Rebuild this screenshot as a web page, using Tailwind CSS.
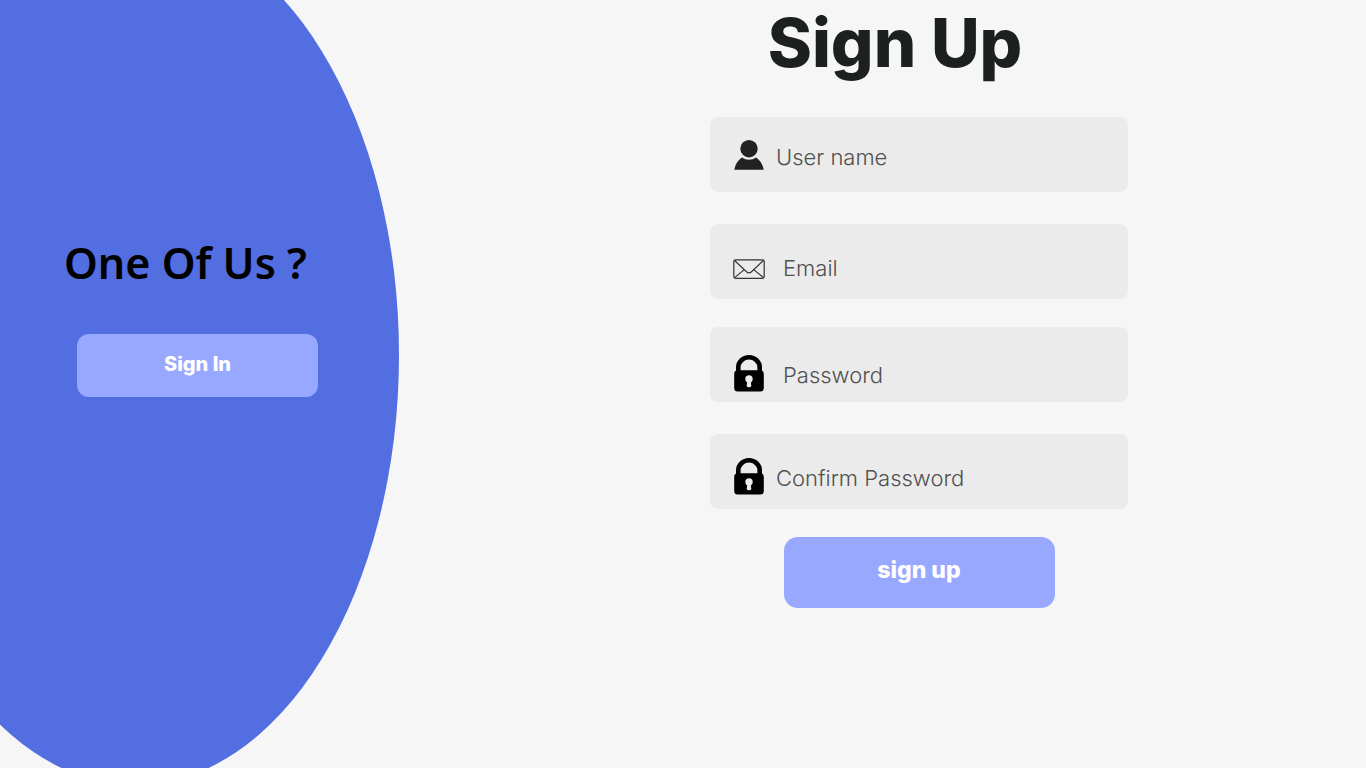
<!DOCTYPE html>
<html lang="en">
<head>
<meta charset="utf-8">
<meta name="viewport" content="width=device-width, initial-scale=1">
<title>Sign Up</title>
<script src="https://cdn.jsdelivr.net/npm/@tailwindcss/browser@4"></script>
</head>
<body class="relative flex min-h-screen overflow-hidden bg-[#f6f6f6] font-['Inter',sans-serif]">
  <div class="absolute -top-[75px] -left-[129px] h-[860px] w-[528px] rounded-[50%] bg-[#526ee0]" aria-hidden="true"></div>

  <aside class="relative flex w-[395px] shrink-0 flex-col items-center pt-[231px]">
    <h2 class="pr-6 font-['Noto_Sans',sans-serif] text-[43px] leading-16 font-semibold text-black">One Of Us ?</h2>
    <button type="button" class="mt-[39px] h-[63px] w-[241px] rounded-xl bg-[#99a8ff] pb-1 text-[20px] font-extrabold text-white">Sign In</button>
  </aside>

  <main class="relative flex flex-1 flex-col items-center pl-[77px]">
    <h1 class="pr-12 text-[67px] leading-[86px] font-extrabold text-[#1c211f]">Sign Up</h1>
    <form class="mt-[31px] flex w-full max-w-[418px] flex-col items-center">
      <label class="flex h-[75px] w-full items-center gap-3 rounded-lg bg-[#ebebeb] px-6">
        <svg class="h-[30px] w-[30px] shrink-0" viewBox="0 0 30 30" fill="#222" aria-hidden="true">
          <circle cx="15" cy="8.700" r="8.700"/>
          <path d="M.3 29.700C1.300 24.200 4 20 7.900 17.500Q15 22.200 22.100 17.500C26 20 28.700 24.200 29.700 29.700Z"/>
        </svg>
        <input type="text" aria-label="User name" placeholder="User name" class="h-8 min-w-0 flex-1 pt-1.5 text-[22px] font-light text-[#444] outline-none placeholder:text-[#505050]">
      </label>
      <label class="mt-8 flex h-[75px] w-full items-center gap-[18px] rounded-lg bg-[#ebebeb] px-[23px] pt-[14px]">
        <svg class="h-5 w-8 shrink-0" viewBox="0 0 32 20" fill="none" stroke="#333" stroke-width="1.200" stroke-linejoin="round" aria-hidden="true">
          <rect x=".8" y=".8" width="30.400" height="18.600" rx="1.800"/>
          <path d="M1.300 1.300 13.500 12.700Q16 15 18.500 12.700L30.700 1.300M1.300 18.900 11.300 10.600M30.700 18.900 20.700 10.600"/>
        </svg>
        <input type="email" aria-label="Email" placeholder="Email" class="h-8 min-w-0 flex-1 text-[22px] font-light text-[#444] outline-none placeholder:text-[#505050]">
      </label>
      <label class="mt-7 flex h-[75px] w-full items-center gap-[19px] rounded-lg bg-[#ebebeb] px-6 pt-[18px]">
        <svg class="h-[37px] w-[30px] shrink-0" viewBox="0 0 30 37" aria-hidden="true">
          <path d="M4.300 18V12.500a10.700 10.200 0 0 1 21.400 0V18" fill="none" stroke="#000" stroke-width="4.600"/>
          <rect x=".2" y="15.200" width="29.600" height="21.300" rx="3.500"/>
          <circle cx="15" cy="24" r="3.700" fill="#ebebeb"/>
          <path d="M13.300 26h3.400l.6 4.800q0 1.500-2.300 1.500t-2.300-1.500Z" fill="#ebebeb"/>
        </svg>
        <input type="password" aria-label="Password" placeholder="Password" class="h-8 min-w-0 flex-1 pt-1 text-[22px] font-light text-[#444] outline-none placeholder:text-[#505050]">
      </label>
      <label class="mt-8 flex h-[75px] w-full items-center gap-3 rounded-lg bg-[#ebebeb] px-6 pt-[10px]">
        <svg class="h-[37px] w-[30px] shrink-0" viewBox="0 0 30 37" aria-hidden="true">
          <path d="M4.300 18V12.500a10.700 10.200 0 0 1 21.400 0V18" fill="none" stroke="#000" stroke-width="4.600"/>
          <rect x=".2" y="15.200" width="29.600" height="21.300" rx="3.500"/>
          <circle cx="15" cy="24" r="3.700" fill="#ebebeb"/>
          <path d="M13.300 26h3.400l.6 4.800q0 1.500-2.300 1.500t-2.300-1.500Z" fill="#ebebeb"/>
        </svg>
        <input type="password" aria-label="Confirm Password" placeholder="Confirm Password" class="h-8 min-w-0 flex-1 pt-1 text-[22px] font-light text-[#444] outline-none placeholder:text-[#505050]">
      </label>
      <button type="submit" class="mt-7 h-[71px] w-[271px] rounded-[14px] bg-[#99a8ff] pb-1 text-[23px] font-extrabold text-white">sign up</button>
    </form>
  </main>
</body>
</html>
